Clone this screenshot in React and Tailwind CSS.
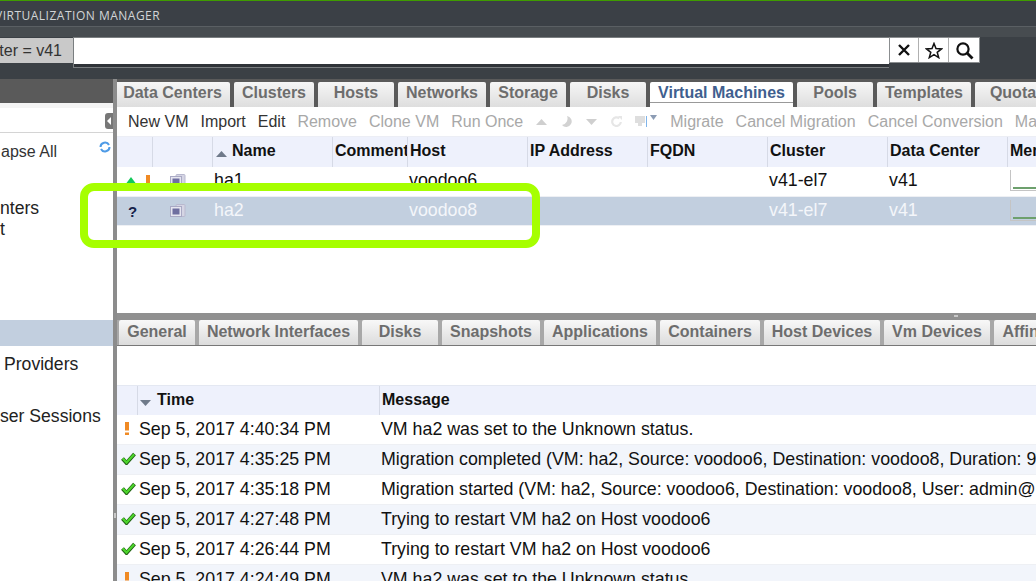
const mainTabs = [
  ["Data Centers", 115, 115],
  ["Clusters", 234, 80],
  ["Hosts", 318, 76],
  ["Networks", 398, 88],
  ["Storage", 490, 76],
  ["Disks", 570, 76],
  ["Virtual Machines", 650, 143],
  ["Pools", 797, 76],
  ["Templates", 877, 94],
  ["Quota", 975, 76],
];

const subTabs = [
  ["General", 119, 76],
  ["Network Interfaces", 199, 159],
  ["Disks", 362, 76],
  ["Snapshots", 442, 98],
  ["Applications", 544, 112],
  ["Containers", 660, 100],
  ["Host Devices", 764, 116],
  ["Vm Devices", 884, 106],
  ["Affinity Labels", 994, 127],
];

const columns = [
  ["", 36],
  ["", 60],
  ["Name", 120],
  ["Comment", 75],
  ["Host", 120],
  ["IP Address", 120],
  ["FQDN", 120],
  ["Cluster", 120],
  ["Data Center", 120],
  ["Memory", 60],
];

const events = [
  ["warn", "Sep 5, 2017 4:40:34 PM", "VM ha2 was set to the Unknown status."],
  ["ok", "Sep 5, 2017 4:35:25 PM", "Migration completed (VM: ha2, Source: voodoo6, Destination: voodoo8, Duration: 9 seconds)"],
  ["ok", "Sep 5, 2017 4:35:18 PM", "Migration started (VM: ha2, Source: voodoo6, Destination: voodoo8, User: admin@internal)"],
  ["ok", "Sep 5, 2017 4:27:48 PM", "Trying to restart VM ha2 on Host voodoo6"],
  ["ok", "Sep 5, 2017 4:26:44 PM", "Trying to restart VM ha2 on Host voodoo6"],
  ["warn", "Sep 5, 2017 4:24:49 PM", "VM ha2 was set to the Unknown status."],
];

function VmIcon() {
  return (
    <svg width="16" height="14" viewBox="0 0 16 14">
      <rect x="6" y="0.5" width="9" height="12" rx="1" fill="#d5d5e4" stroke="#b9b9cf" />
      <rect x="0.5" y="2.5" width="11" height="10" fill="#e6e6f0" stroke="#a9a9c4" />
      <rect x="2.5" y="4.5" width="7" height="6" fill="#6f6fa0" />
    </svg>
  );
}

function Check() {
  return (
    <svg width="15" height="13" viewBox="0 0 15 13">
      <path d="M1.5 6.5 L5.5 11 L13.5 2" fill="none" stroke="#1f5f12" strokeWidth="3.8" />
      <path d="M1.8 6.5 L5.5 10.6 L13.2 2.2" fill="none" stroke="#4cd52b" strokeWidth="2.2" />
    </svg>
  );
}

function Warn() {
  return (
    <svg width="4" height="13" viewBox="0 0 4 13" className="mr-[2px]">
      <rect width="4" height="8.5" fill="#f08a24" />
      <rect y="10.5" width="4" height="2.5" fill="#f08a24" />
    </svg>
  );
}

function Tri({ up, color = "#cfcfcf", w = 11, h = 6 }) {
  return (
    <svg width={w} height={h} viewBox="0 0 11 7" preserveAspectRatio="none">
      <path d={up ? "M5.5 0 L11 7 L0 7 Z" : "M0 0 L11 0 L5.5 7 Z"} fill={color} />
    </svg>
  );
}

function TabBar({ items, start, active, h, activeClass, idleClass }) {
  return (
    <div className="flex" style={{ height: h }}>
      {items.map(([label, x, w], i) => {
        const gap = i === 0 ? x - start : x - items[i - 1][1] - items[i - 1][2];
        return (
          <div
            key={label}
            style={{ width: w, marginLeft: gap }}
            className={
              "shrink-0 flex items-center justify-center rounded-t-[2px] text-[16px] font-bold whitespace-nowrap " +
              (label === active ? activeClass : idleClass)
            }
          >
            {label}
          </div>
        );
      })}
    </div>
  );
}

function VmRow({ name, host, selected, status }) {
  const text = selected ? "text-[#f4f6fa]" : "text-[#111]";
  return (
    <div className={"flex h-[30px] items-center text-[17.8px] border-b border-[#eef0f4] " + text + (selected ? " bg-[#c2cfdf]" : " bg-white")}>
      <div className="w-[36px] shrink-0 flex items-center gap-[9px] pl-[8px]">{status}</div>
      <div className="w-[60px] shrink-0 pl-[17px] flex"><VmIcon /></div>
      <div className="w-[120px] shrink-0 pl-[1px] mb-[2px]">{name}</div>
      <div className="w-[75px] shrink-0" />
      <div className="w-[120px] shrink-0 pl-[1px] mb-[2px]">{host}</div>
      <div className="w-[120px] shrink-0" />
      <div className="w-[120px] shrink-0" />
      <div className="w-[120px] shrink-0 pl-[1px] mb-[2px]">v41-el7</div>
      <div className="w-[120px] shrink-0 pl-[1px] mb-[2px]">v41</div>
      <div className="w-[60px] shrink-0 pl-[2px] mb-[1px]">
        <div className="h-[21px] w-[40px] border-l border-b border-[#c4c4c4] flex items-end">
          <div className="h-[2px] w-full mb-[1px] ml-[2px] bg-[#6da06d]" />
        </div>
      </div>
    </div>
  );
}

export default function App() {
  return (
    <div className="relative h-[581px] w-[1036px] overflow-hidden bg-white font-['Liberation_Sans',Arial,sans-serif]">
      {/* top bar */}
      <div className="h-[1px] bg-[#3f9c00]" />
      <div className="h-[26px] pt-[4px] bg-[#3b4046] border-b border-[#5a5f63] flex items-center text-[12px] tracking-[0.5px] text-[#d2d5d7]">
        <span className="ml-[-5px] whitespace-nowrap font-['Open_Sans',sans-serif]">VIRTUALIZATION MANAGER</span>
      </div>
      <div className="h-[52px] bg-[#3b4045]">
        <div className="h-[10px] bg-[#474c50]" />
        <div className="flex items-start">
          <div className="w-[73px] h-[25px] mt-[1px] bg-[#c9c9c9] flex items-center justify-end pr-[11px] text-[16px] text-[#333] whitespace-nowrap overflow-hidden">
            <span>ter = v41</span>
          </div>
          <div className="w-[816px] h-[31px] border-l border-t border-b border-[#7a7e80] bg-[#2f3338]">
            <div className="h-[26px] bg-white" />
          </div>
          <div className="flex h-[26px] bg-white border border-[#8b8e90]">
            <div className="w-[29px] flex items-center justify-center border-r border-[#b0b0b0]">
              <svg width="14" height="14" viewBox="0 0 14 14"><path d="M2 2 L12 12 M12 2 L2 12" stroke="#111" strokeWidth="2.4" /></svg>
            </div>
            <div className="w-[30px] flex items-center justify-center border-r border-[#b0b0b0]">
              <svg width="18" height="17" viewBox="0 0 18 17"><path d="M9 1.5 L11 6.6 L16.6 6.9 L12.2 10.3 L13.7 15.6 L9 12.6 L4.3 15.6 L5.8 10.3 L1.4 6.9 L7 6.6 Z" fill="none" stroke="#111" strokeWidth="1.5" /></svg>
            </div>
            <div className="w-[30px] flex items-center justify-center">
              <svg width="19" height="19" viewBox="0 0 19 19"><circle cx="8" cy="8" r="5.6" fill="none" stroke="#111" strokeWidth="2.2" /><path d="M12 12 L17.5 17.5" stroke="#111" strokeWidth="2.8" /></svg>
            </div>
          </div>
        </div>
      </div>

      <div className="flex h-[502px]">
        {/* sidebar */}
        <div className="w-[113px] shrink-0 flex flex-col">
          <div className="h-[24px] shrink-0 bg-[#5a5a5a]" />
          <div className="h-[5px] shrink-0 bg-[#f4f4f4]" />
          <div className="relative h-[25px] shrink-0 border-b border-[#d4d4d4]">
            <div className="absolute right-0 top-[5px] h-[16px] w-[8px] rounded-l-[3px] bg-[#777] flex items-center justify-center">
              <div className="w-0 h-0 border-y-[4px] border-y-transparent border-r-[4px] border-r-white" />
            </div>
          </div>
          <div className="flex h-[36px] shrink-0 justify-between items-center pl-[1px] pr-[2px] text-[16px] text-[#333]">
            <span className="whitespace-nowrap mt-[2px]">apse All</span>
            <svg width="12" height="12" viewBox="0 0 12 12" className="mb-[8px]"><path d="M1.5 6 A4.5 4.5 0 0 1 10 4" fill="none" stroke="#4f9be6" strokeWidth="2" /><path d="M10.5 6 A4.5 4.5 0 0 1 2 8" fill="none" stroke="#4f9be6" strokeWidth="2" /></svg>
          </div>
          <div className="mt-[29px] text-[17.6px] text-[#222] leading-[21px]">
            <div>nters</div>
            <div>t</div>
          </div>
          <div className="h-[26px] shrink-0 bg-[#c2cfdf] mt-[80px]" />
          <div className="pl-[4px] mt-[5px] text-[17.6px] leading-[26px] text-[#222]">Providers</div>
          <div className="mt-[26px] text-[17.6px] leading-[26px] text-[#222] whitespace-nowrap">ser Sessions</div>
        </div>
        <div className="relative w-[4px] shrink-0 bg-[#8c8c8c]">
          <div className="absolute left-[1px] top-[434px] h-[5px] w-[2px] bg-[#c8c8c8]" />
        </div>

        {/* main */}
        <div className="flex-1 min-w-0 flex flex-col">
          <div className="h-[28px] shrink-0 pt-[3px] bg-[#5a5a5a]">
            <TabBar
              items={mainTabs}
              start={117}
              active="Virtual Machines"
              h={25}
              activeClass="pb-[4px] bg-white text-[#3f5f8f] shadow-[inset_0_-4px_0_#fff,inset_0_-5px_0_#999]"
              idleClass="pb-[4px] bg-gradient-to-b from-[#f6f6f6] to-[#dedede] text-[#6d6d6d]"
            />
          </div>
          {/* toolbar */}
          <div className="h-[30px] shrink-0 flex items-center whitespace-nowrap text-[16px] text-[#a8a8a8] bg-white border-b border-[#eceef5]">
            <span className="ml-[11px] text-[#333]">New VM</span>
            <span className="ml-[12px] text-[#333]">Import</span>
            <span className="ml-[12px] text-[#333]">Edit</span>
            <span className="ml-[12px]">Remove</span>
            <span className="ml-[12px]">Clone VM</span>
            <span className="ml-[12px]">Run Once</span>
            <span className="ml-[13px] flex items-center"><Tri up /></span>
            <span className="ml-[15px] flex items-center">
              <svg width="10" height="11" viewBox="0 0 10 11"><path d="M5 0 A5.5 5.5 0 1 1 0 9 A6.5 6.5 0 0 0 5 0 Z" fill="#d2d2d2" /></svg>
            </span>
            <span className="ml-[14px] flex items-center"><Tri /></span>
            <span className="ml-[14px] flex items-center">
              <svg width="11" height="11" viewBox="0 0 11 11"><path d="M9.8 6 A4.3 4.3 0 1 1 8.3 2.4" fill="none" stroke="#e6e6e6" strokeWidth="2.2" /><path d="M7 0 L11 0 L11 4 Z" fill="#e6e6e6" /></svg>
            </span>
            <span className="ml-[13px] flex items-center">
              <svg width="12" height="11" viewBox="0 0 12 11"><rect width="10" height="7" fill="#dedede" /><rect x="3" y="7" width="4" height="3" fill="#dedede" /><rect x="11" width="1" height="11" fill="#7fb4ea" /></svg>
            </span>
            <span className="ml-[3px] mb-[9px] flex items-center"><Tri color="#8c9cb4" w={7} h={5} /></span>
            <span className="ml-[13px]">Migrate</span>
            <span className="ml-[12px]">Cancel Migration</span>
            <span className="ml-[12px]">Cancel Conversion</span>
            <span className="ml-[12px]">Make Template</span>
          </div>
          {/* vm table */}
          <div className="flex h-[30px] shrink-0 items-center bg-[#eef1fc] text-[16px] font-bold text-[#111] whitespace-nowrap">
            {columns.map(([label, w], i) => (
              <div key={i} style={{ width: w }} className="shrink-0 h-full flex items-center border-r border-[#d6dae6] pl-[1px] pb-[3px] overflow-hidden">
                {label === "Name" && <span className="ml-[2px] mr-[5px] mt-[6px] flex"><Tri up color="#6f7a8a" /></span>}
                <span className={label === "Name" ? "" : "pl-[1px]"}>{label}</span>
              </div>
            ))}
          </div>
          <VmRow name="ha1" host="voodoo6" status={<>
            <svg width="12" height="8" viewBox="0 0 12 8"><path d="M6 0 L12 8 L0 8 Z" fill="#12c95a" /></svg>
            <span className="flex"><svg width="4" height="12" viewBox="0 0 4 12"><rect width="4" height="8" fill="#f08a24" /><rect y="10" width="4" height="2" fill="#f08a24" /></svg></span>
          </>} />
          <VmRow name="ha2" host="voodoo8" selected status={
            <span className="text-[15px] leading-none font-bold text-[#16224a] ml-[3px]">?</span>
          } />
          <div className="h-[87px] shrink-0" />

          {/* sub tabs */}
          <div className="relative h-[7px] shrink-0 bg-[#909090]">
            <div className="absolute left-[837px] top-[2px] h-[2px] w-[4px] bg-[#c8c8c8]" />
          </div>
          <div className="h-[26px] shrink-0 bg-[#a8a8a8] border-b border-[#777]">
            <TabBar
              items={subTabs}
              start={117}
              active=""
              h={25}
              activeClass=""
              idleClass="pb-[2px] bg-gradient-to-b from-[#f8f8f8] to-[#dcdcdc] text-[#6d6d6d]"
            />
          </div>
          <div className="h-[39px] shrink-0" />

          {/* events */}
          <div className="flex h-[30px] shrink-0 items-center bg-[#eef1fc] border-t border-[#e4e8f2] text-[16px] font-bold text-[#111]">
            <div className="w-[21px] h-full border-r border-[#d6dae6]" />
            <div className="w-[242px] h-full flex items-center border-r border-[#d6dae6] pb-[1px]">
              <span className="ml-[2px] mr-[6px] mt-[6px] flex"><Tri color="#6f7a8a" /></span>
              Time
            </div>
            <div className="pl-[2px] pb-[1px]">Message</div>
          </div>
          {events.map(([kind, time, msg], i) => (
            <div key={time} className={"flex h-[30px] shrink-0 items-center text-[17.8px] text-[#111] whitespace-nowrap border-b border-[#eef0f4] " + (i % 2 ? "bg-[#f2f5fb]" : "bg-white")}>
              <div className="w-[22px] shrink-0 flex justify-center mb-[2px]">{kind === "ok" ? <Check /> : <Warn />}</div>
              <div className="w-[242px] shrink-0 mb-[2px]">{time}</div>
              <div className="mb-[2px]">{msg}</div>
            </div>
          ))}
        </div>
      </div>

      {/* highlight drawn over the screenshot */}
      <div className="absolute left-[80px] top-[183px] h-[65px] w-[460px] rounded-[14px] border-[8px] border-[#a6ff00] blur-[0.4px]" />
    </div>
  );
}
